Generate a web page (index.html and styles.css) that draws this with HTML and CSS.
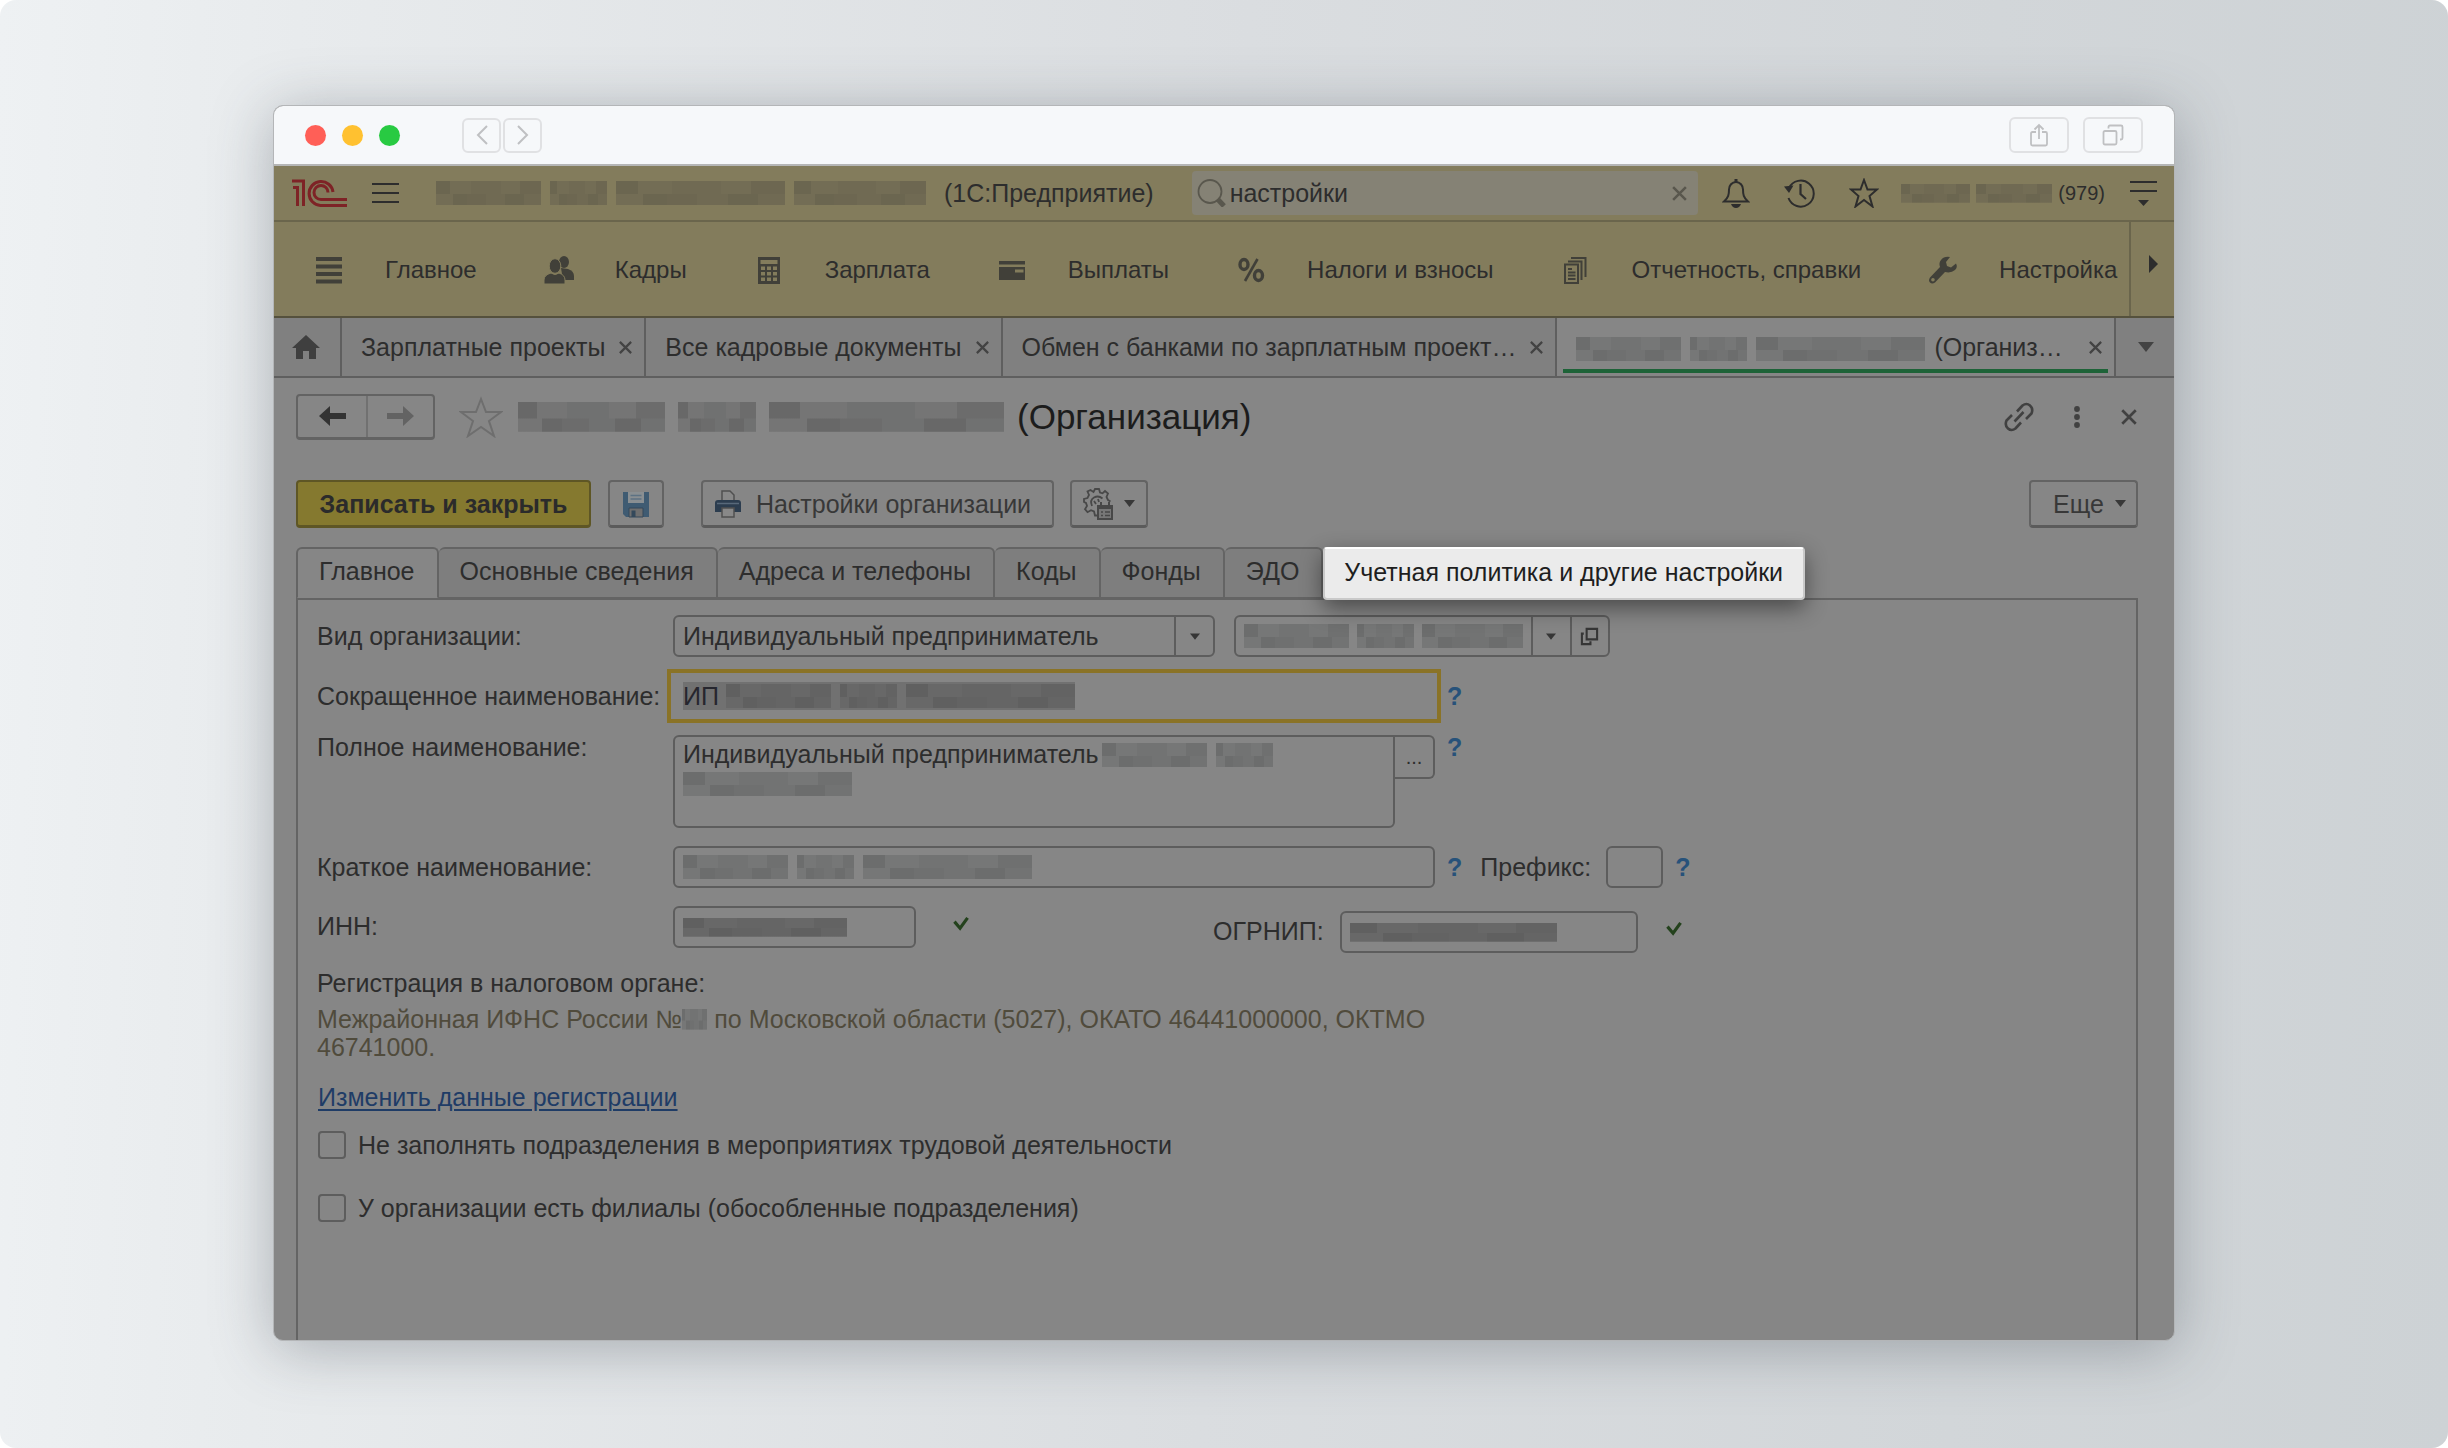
FILE: index.html
```html
<!DOCTYPE html>
<html lang="ru">
<head>
<meta charset="utf-8">
<title>Организация — 1С:Предприятие</title>
<link rel="stylesheet" href="styles.css">
</head>
<body>
<svg class="defs" aria-hidden="true">
  <symbol id="x" viewBox="0 0 16 16"><path d="M2 2l12 12M14 2L2 14" fill="none" stroke="currentColor" stroke-width="2.4"/></symbol>
  <symbol id="tri" viewBox="0 0 16 10"><path d="M0 0h16L8 10z" fill="currentColor"/></symbol>
  <symbol id="check" viewBox="0 0 18 16"><path d="M2 6l6 7 8-11" fill="none" stroke="currentColor" stroke-width="3.4"/></symbol>
  <symbol id="open" viewBox="0 0 20 20"><path d="M7 2h11v11H7zM4 7H2v11h9v-3" fill="none" stroke="currentColor" stroke-width="2.2"/></symbol>
</svg>
<div class="stage">
<main class="window">
  <header class="titlebar">
    <span class="dot red"></span><span class="dot yellow"></span><span class="dot green"></span>
    <div class="history">
      <button class="mac" aria-label="Назад"><svg width="12" height="20" viewBox="0 0 12 20"><path d="M11 1L2 10l9 9" fill="none" stroke="currentColor" stroke-width="2"/></svg></button>
      <button class="mac" aria-label="Вперёд"><svg width="12" height="20" viewBox="0 0 12 20"><path d="M1 1l9 9-9 9" fill="none" stroke="currentColor" stroke-width="2"/></svg></button>
    </div>
    <div class="share">
      <button class="mac wide" aria-label="Поделиться"><svg width="20" height="24" viewBox="0 0 20 24"><path d="M7 9H3.500q-1.500 0-1.500 1.500V21q0 1.500 1.500 1.500h13q1.500 0 1.500-1.500V10.500Q18 9 16.500 9H13M10 16V2M5.500 6.500L10 2l4.500 4.500" fill="none" stroke="currentColor" stroke-width="1.800"/></svg></button>
      <button class="mac wide" aria-label="Вкладки"><svg width="22" height="22" viewBox="0 0 22 22"><path d="M3 7h10q1.500 0 1.500 1.500V19q0 1.500-1.500 1.500H3q-1.500 0-1.500-1.500V8.500Q1.500 7 3 7zM6.500 4.500V3Q6.500 1.500 8 1.500h11q1.500 0 1.500 1.500v11q0 1.500-1.500 1.500h-1" fill="none" stroke="currentColor" stroke-width="1.800"/></svg></button>
    </div>
  </header>

  <section class="appbar">
    <svg class="logo" width="56" height="28" viewBox="0 0 56 28"><g fill="none" stroke="currentColor" stroke-width="3"><path d="M1 8.500h4.500V27M0 2h11.500V27"/><path d="M41 13A12 12 0 1 0 28.500 26.500H55"/><path d="M36 13.500A7 7 0 1 0 29 20.500H55"/></g></svg>
    <button class="icon burger" aria-label="Меню"><svg width="28" height="22" viewBox="0 0 28 22"><path d="M0 2h27M0 11h27M0 20h27" stroke="currentColor" stroke-width="2.200"/></svg></button>
    <div class="base">
      <i class="mz olive w105"></i><i class="mz olive w57"></i><i class="mz olive w169"></i><i class="mz olive w132"></i>
    </div>
    <span class="product">(1С:Предприятие)</span>
    <label class="search">
      <svg width="30" height="28" viewBox="0 0 30 28"><circle cx="13" cy="12.500" r="11.500" fill="none" stroke="currentColor" stroke-width="1.800"/><path d="M20.500 20l6.500 7" stroke="currentColor" stroke-width="5"/></svg>
      <input type="text" value="настройки" aria-label="Поиск">
      <button class="icon clear" aria-label="Очистить"><svg width="17" height="17"><use href="#x"/></svg></button>
    </label>
    <div class="tools">
      <button class="icon" aria-label="Уведомления"><svg width="28" height="30" viewBox="0 0 28 30"><path d="M2 23.500c4.500-4 5-7 5-12 0-4 3-7.500 7-7.500s7 3.500 7 7.500c0 5 .5 8 5 12z" fill="none" stroke="currentColor" stroke-width="2"/><path d="M12.500 1h3v3h-3zM9 26h10q-1.500 4-5 4t-5-4z" fill="currentColor"/></svg></button>
      <button class="icon" aria-label="История"><svg width="31" height="30" viewBox="0 0 31 30"><path d="M5 10A13 13 0 1 1 4.500 20" fill="none" stroke="currentColor" stroke-width="2"/><path d="M0 8.500l9.500-1L5 15z" fill="currentColor"/><path d="M16.500 6v10l5.500 5" fill="none" stroke="currentColor" stroke-width="2.200"/></svg></button>
      <button class="icon" aria-label="Избранное"><svg width="30" height="30" viewBox="0 0 30 30"><path d="M15 2l3.500 9.500H28l-7.500 6.500 3 10.500-8.500-6.500-8.500 6.500 3-10.500L2 11.500h9.500z" fill="none" stroke="currentColor" stroke-width="2"/></svg></button>
    </div>
    <div class="user"><i class="mz olive short w69"></i><i class="mz olive short w76"></i><span>(979)</span></div>
    <button class="icon" aria-label="Сервис"><svg width="28" height="26" viewBox="0 0 28 26"><path d="M0 2h27M0 11h27" stroke="currentColor" stroke-width="2.200"/><path d="M8 20h11l-5.500 6z" fill="currentColor"/></svg></button>
  </section>

  <nav class="sections">
    <div class="items">
      <a href="#"><svg viewBox="0 0 30 30"><path d="M2 4h26M2 11.500h26M2 19h26M2 26.500h26" stroke="currentColor" stroke-width="3.800"/></svg>Главное</a>
      <a href="#"><svg viewBox="0 0 30 30"><g fill="currentColor"><ellipse cx="20" cy="7" rx="5" ry="6"/><path d="M17 13l7 1q6 2 6 7v4H19z"/><ellipse cx="11" cy="11" rx="5.800" ry="7.300" stroke="#837c5c"/><path d="M0 29v-4q0-5 7-7 4 3 8 0 6 2 6 7v4z" stroke="#837c5c"/></g></svg>Кадры</a>
      <a href="#"><svg viewBox="0 0 30 30"><path fill="currentColor" fill-rule="evenodd" d="M4 2h22v27H4zM6.500 5v4h17V5zM7 11.500v3.500h4v-3.500zM13 11.500v3.500h4v-3.500zM19 11.500v3.500h4v-3.500zM7 17v3.500h4V17zM13 17v3.500h4V17zM19 17v3.500h4V17zM7 22.500v3.500h4v-3.500zM13 22.500v3.500h4v-3.500zM19 22.500v3.500h4v-3.500z"/></svg>Зарплата</a>
      <a href="#"><svg viewBox="0 0 30 30"><path fill="currentColor" fill-rule="evenodd" d="M2 6h26v3.500H2zM2 12h26v13H2zM18 14.500v3h8.500v-3z"/></svg>Выплаты</a>
      <a href="#"><svg viewBox="0 0 30 30"><g fill="none" stroke="currentColor" stroke-width="3.400"><ellipse cx="8" cy="9.500" rx="4" ry="5"/><ellipse cx="22.500" cy="20.500" rx="4" ry="5"/><path d="M21.500 4L9 26" stroke-width="2.600"/></g></svg>Налоги и взносы</a>
      <a href="#"><svg viewBox="0 0 30 30"><g fill="none" stroke="currentColor" stroke-width="2"><path d="M4 9.500h13V28H4zM7 6.500h13.500V25M10 3H24.500v19"/><path d="M7 14h4M7 17.500h7.500M7 20.500h7.500M7 24h7.500"/></g></svg>Отчетность, справки</a>
      <a href="#"><svg viewBox="0 0 30 30"><path fill="currentColor" d="M28 8.500l-5 4-4-1.500-1-4L22 2q-6-1-9 3-2.500 3-1 7L2 22.500q-2 3 0 5t5 0L17 17q6 1.500 10-2 3-3 1-6.500zM5 23a1.800 1.800 0 1 1-.1 3.600A1.800 1.800 0 0 1 5 23z"/></svg>Настройка</a>
    </div>
    <button class="icon more" aria-label="Далее"><svg width="9" height="18" viewBox="0 0 9 18"><path d="M0 0v18l9-9z" fill="currentColor"/></svg></button>
  </nav>

  <nav class="opened">
    <a class="home" href="#" aria-label="Начальная страница"><svg width="28" height="24" viewBox="0 0 28 24"><path d="M14 0l14 13h-4v11h-7v-8h-6v8H4V13H0z" fill="currentColor"/></svg></a>
    <div class="tab"><a href="#">Зарплатные проекты</a><button class="icon" aria-label="Закрыть"><svg width="15" height="15"><use href="#x"/></svg></button></div>
    <div class="tab"><a href="#">Все кадровые документы</a><button class="icon" aria-label="Закрыть"><svg width="15" height="15"><use href="#x"/></svg></button></div>
    <div class="tab"><a href="#">Обмен с банками по зарплатным проект…</a><button class="icon" aria-label="Закрыть"><svg width="15" height="15"><use href="#x"/></svg></button></div>
    <div class="tab current"><a href="#"><i class="mz w105"></i><i class="mz w57"></i><i class="mz w169"></i>(Организ…</a><button class="icon" aria-label="Закрыть"><svg width="15" height="15"><use href="#x"/></svg></button></div>
    <button class="icon list" aria-label="Список окон"><svg width="16" height="10"><use href="#tri"/></svg></button>
  </nav>

  <section class="page">
    <div class="heading">
      <div class="backfwd">
        <button aria-label="Назад"><svg width="27" height="20" viewBox="0 0 27 20"><path d="M0 10L11 0v7h16v6H11v7z" fill="currentColor"/></svg></button>
        <button class="off" aria-label="Вперед"><svg width="27" height="20" viewBox="0 0 27 20"><path d="M27 10L16 0v7H0v6h16v7z" fill="currentColor"/></svg></button>
      </div>
      <svg class="fav" width="44" height="42" viewBox="0 0 44 42"><path d="M22 3l5 13h15L30 25l5 15-13-9-13 9 5-15L2 16h15z" fill="none" stroke="currentColor" stroke-width="2"/></svg>
      <h1><i class="mz big w147"></i><i class="mz big w78"></i><i class="mz big w235"></i>(Организация)</h1>
      <div class="wintools">
        <button class="icon" aria-label="Ссылка"><svg width="30" height="30" viewBox="0 0 30 30"><g fill="none" stroke="currentColor" stroke-width="2.600"><path d="M13 9.500L18.500 3.500q4-3 7.500 0t1.500 8L22 17M17 20.500l-5.500 6q-4 3-7.500 0t-1.500-8L8 13M10.500 19.500l9-9.500"/></g></svg></button>
        <button class="icon" aria-label="Еще"><svg width="6" height="22" viewBox="0 0 6 22"><g fill="currentColor"><circle cx="3" cy="3" r="2.900"/><circle cx="3" cy="11" r="2.900"/><circle cx="3" cy="19" r="2.900"/></g></svg></button>
        <button class="icon" aria-label="Закрыть"><svg width="18" height="18"><use href="#x"/></svg></button>
      </div>
    </div>

    <div class="commands">
      <button class="btn primary">Записать и закрыть</button>
      <button class="btn save" aria-label="Записать"><svg width="28" height="28" viewBox="0 0 28 28"><path d="M1 2h26v25H4l-3-3z" fill="#3f5b72"/><path d="M6 2h16v11H6z" fill="#8a8f92"/><path d="M8.500 5.500h11M8.500 9h11" stroke="#5d7283" stroke-width="1.500"/><path d="M7 18h14v9H7z" fill="#6f6f6f" stroke="#34495b"/><path d="M9.500 20.500h4V27h-4z" fill="#34495b"/></svg></button>
      <button class="btn print"><svg width="28" height="28" viewBox="0 0 28 28"><path d="M8 11V1h8l4 4v6z" fill="#888" stroke="#505050" stroke-width="1.500"/><path d="M1 13q0-3 3-3h20q3 0 3 3v9H1z" fill="#2c3d4f"/><path d="M3 13.500h22" stroke="#58697a" stroke-width="1.500"/><path d="M8 18h12v9H8z" fill="#888" stroke="#505050" stroke-width="1.500"/></svg>Настройки организации</button>
      <button class="btn gear" aria-label="Действия"><svg width="30" height="32" viewBox="0 0 30 32"><g fill="none" stroke="#484848" stroke-width="1.800"><path d="M14 27.500h-2l-1-4-3-1.300-3.500 2-2.500-3 2-3.200L3 15l-2-1v-3l3.500-1L6 7 4.500 3.500 7.500 2l3 2L12 1h4l1 3.500 2.500.8L22 3l3 2.500L23.500 9l1.500 3 2.500 1.500"/><path d="M9 18q-2.500-6 2-8.500t8.500 1M11 13l2 3m2-5l1 3"/></g><path d="M15 18h14v13H15zM18 14v5M26 14v5M15 20h14" fill="#777" stroke="#484848" stroke-width="2"/><path d="M18 24h2M22 24h5M18 27.500h2M22 27.500h5" stroke="#484848" stroke-width="1.500"/></svg><svg width="11" height="7"><use href="#tri"/></svg></button>
      <button class="btn else">Еще<svg width="11" height="7"><use href="#tri"/></svg></button>
    </div>

    <div class="formtabs">
      <button class="active">Главное</button><button>Основные сведения</button><button>Адреса и телефоны</button><button>Коды</button><button>Фонды</button><button>ЭДО</button><button class="spot">Учетная политика и другие настройки</button>
    </div>

    <form class="panel">
      <div class="row">
        <label class="cap" for="kind">Вид организации:</label>
        <div class="field kind"><select id="kind"><option>Индивидуальный предприниматель</option></select><span class="cell"><svg width="10" height="7"><use href="#tri"/></svg></span></div>
        <div class="field person"><i class="mz w105"></i><i class="mz w57"></i><i class="mz w101"></i><input type="text" aria-label="Физическое лицо"><button type="button" class="cell" aria-label="Выбрать"><svg width="10" height="7"><use href="#tri"/></svg></button><button type="button" class="cell" aria-label="Открыть"><svg width="19" height="19"><use href="#open"/></svg></button></div>
      </div>
      <div class="row">
        <label class="cap" for="short">Сокращенное наименование:</label>
        <div class="field long focused"><span class="sel">ИП<i class="mz deep w105"></i><i class="mz deep w57"></i><i class="mz deep w169"></i></span><input id="short" type="text"></div>
        <a class="help" href="#">?</a>
      </div>
      <div class="row full">
        <label class="cap top" for="full">Полное наименование:</label>
        <div class="area"><textarea id="full">Индивидуальный предприниматель</textarea>
          <div class="over one"><i class="mz w105"></i><i class="mz w57"></i></div><div class="over two"><i class="mz w169"></i></div></div>
        <button type="button" class="dots" aria-label="Редактировать">...</button>
        <a class="help top" href="#">?</a>
      </div>
      <div class="row">
        <label class="cap" for="brief">Краткое наименование:</label>
        <div class="field long"><i class="mz w105"></i><i class="mz w57"></i><i class="mz w169"></i><input id="brief" type="text"></div>
        <a class="help" href="#">?</a>
        <label class="prefix" for="prefix">Префикс:</label>
        <div class="field tiny"><input id="prefix" type="text"></div>
        <a class="help" href="#">?</a>
      </div>
      <div class="row ids">
        <label class="cap" for="inn">ИНН:</label>
        <div class="field inn"><i class="mz deep short w164"></i><input id="inn" type="text"></div>
        <svg class="ok" width="18" height="15"><use href="#check"/></svg>
        <div class="ogrn">
          <label for="ogrn">ОГРНИП:</label>
          <div class="field"><i class="mz deep short w207"></i><input id="ogrn" type="text"></div>
          <svg class="ok" width="18" height="15"><use href="#check"/></svg>
        </div>
      </div>
      <p class="reg">Регистрация в налоговом органе:</p>
      <p class="tax">Межрайонная ИФНС России №<i class="mz short w25"></i> по Московской области (5027), ОКАТО 46441000000, ОКТМО 46741000.</p>
      <a class="change" href="#">Изменить данные регистрации</a>
      <label class="tick"><input type="checkbox">Не заполнять подразделения в мероприятиях трудовой деятельности</label>
      <label class="tick"><input type="checkbox">У организации есть филиалы (обособленные подразделения)</label>
    </form>
  </section>
</main>
</div>
</body>
</html>
```
FILE: styles.css
```css
* { box-sizing: border-box; }
body { margin: 0; background: #fff; color: #2d2d2d; font: 25px/28px "Liberation Sans", Arial, sans-serif; }
button, input, select, textarea { font: inherit; color: inherit; margin: 0; padding: 0; border: 0; background: none; border-radius: 0; outline: 0; }
button { display: flex; align-items: center; justify-content: center; }
a { color: inherit; text-decoration: none; }
svg { display: block; flex: none; }
h1, p { margin: 0; font-weight: normal; }
.defs { position: absolute; width: 0; height: 0; }

.stage { display: flex; min-height: 100vh; padding: 105px 273px 107px; border-radius: 16px; background: linear-gradient(92deg, #eef1f3 0%, #e8ebed 12%, #dadde0 50%, #d2d6d9 80%, #cdd2d5 100%); }
.window { flex: 1; min-width: 0; display: flex; flex-direction: column; border: 1px solid #b4b6b8; border-radius: 10px; background: #868686; box-shadow: 0 8px 60px rgba(60, 70, 80, .36); overflow: hidden; }

/* Browser frame */
.titlebar { display: flex; align-items: center; height: 60px; padding: 0 31px; background: #f6f8fa; border-bottom: 2px solid #b5b6b6; }
.dot { width: 21px; height: 21px; margin-right: 16px; border-radius: 50%; }
.red { background: #ff5f57; }
.yellow { background: #ffc130; }
.green { background: #28ca42; }
.history { display: flex; gap: 2px; margin-left: 46px; }
.share { display: flex; gap: 14px; margin-left: auto; }
.mac { width: 39px; height: 35px; border: 2px solid #e0e1e3; border-radius: 6px; color: #bfc0c2; }
.mac.wide { width: 60px; height: 36px; }

/* Redacted text */
.mz { flex: none; display: inline-block; height: 24px; margin-right: 9px; vertical-align: middle; --a: #727373; --b: #6c6d6d; --c: #767777; --d: #6f7070;
  background:
    linear-gradient(90deg, var(--b) 0 13%, var(--c) 13% 33%, var(--a) 33% 62%, var(--c) 62% 80%, var(--d) 80%) 0 0 / 100% 55% no-repeat,
    linear-gradient(90deg, var(--c) 0 16%, var(--b) 16% 30%, var(--d) 30% 48%, var(--a) 48% 66%, var(--b) 66% 84%, var(--a) 84%) 0 100% / 100% 46% no-repeat; }
.mz.olive { --a: #706a53; --b: #6b6650; --c: #736d55; --d: #6d6751; }
.mz.deep { --a: #656565; --b: #606060; --c: #686868; --d: #636363; }
.mz.big { height: 30px; margin-right: 13px; --a: #707171; --b: #686868; --c: #757575; --d: #6c6c6c; }
.mz.short { height: 19px; }
.w25 { width: 25px; } .w57 { width: 57px; } .w69 { width: 69px; } .w76 { width: 76px; } .w78 { width: 78px; }
.w101 { width: 101px; } .w105 { width: 105px; } .w132 { width: 132px; } .w147 { width: 147px; } .w164 { width: 164px; }
.w169 { width: 169px; } .w207 { width: 207px; } .w235 { width: 235px; }

/* Top bar */
.appbar { display: flex; align-items: center; height: 56px; padding: 0 16px 0 18px; background: #837c5c; border-bottom: 2px solid #6a654c; }
.logo { color: #7e2326; }
.burger { margin-left: 24px; }
.base { display: flex; margin-left: 36px; }
.product { margin-left: 9px; white-space: nowrap; }
.search { flex: 1; display: flex; align-items: center; min-width: 0; height: 44px; margin-left: 38px; padding: 0 10px 0 5px; border-radius: 4px; background: #858275; }
.search svg { color: #59574d; }
.search input { flex: 1; min-width: 0; margin-left: 3px; }
.tools { display: flex; gap: 34px; margin-left: 24px; }
.user { display: flex; align-items: center; margin: 0 25px 0 22px; font-size: 20px; }
.user .mz { margin-right: 6px; }

/* Sections */
.sections { display: flex; height: 96px; background: #837c5c; border-bottom: 2px solid #55513d; }
.items { flex: 1; min-width: 0; display: flex; align-items: center; gap: 67px; padding: 2px 0 0 40px; overflow: hidden; white-space: nowrap; font-size: 24px; }
.items a { display: flex; align-items: center; gap: 41px; }
.items svg { width: 30px; height: 30px; color: #414039; }
.more { width: 45px; padding: 0 2px 10px 4px; border-left: 2px solid #6a654c; }

/* Open windows */
.opened { display: flex; height: 60px; background: #808080; border-bottom: 2px solid #5f5f5f; }
.home { flex: none; width: 68px; display: flex; align-items: center; justify-content: center; border-right: 2px solid #5f5f5f; color: #3f3f3f; }
.home svg { margin-right: 3px; }
.tab { flex: none; display: flex; align-items: center; gap: 13px; padding: 0 11px 0 19px; border-right: 2px solid #5f5f5f; white-space: nowrap; }
.tab .icon, .list { color: #434343; }
.tab.current { flex: 1; position: relative; justify-content: space-between; background: #868686; }
.current::after { content: ""; position: absolute; left: 6px; right: 6px; bottom: 3px; height: 4px; background: #1e6338; }
.list { flex: none; width: 58px; padding-left: 2px; }

/* Page */
.page { flex: 1; display: flex; flex-direction: column; padding: 15px 36px 0 22px; }
.heading { display: flex; align-items: center; height: 47px; }
.backfwd { display: flex; height: 46px; border: 2px solid #636363; border-bottom-width: 3px; border-radius: 4px; }
.backfwd button { width: 68px; color: #333; }
.backfwd .off { width: 67px; border-left: 2px solid #717171; color: #636363; }
.fav { margin-left: 24px; color: #6e6e6e; }
h1 { display: flex; align-items: center; margin-left: 15px; font-size: 35px; line-height: 40px; color: #1c1c1c; white-space: nowrap; }
.wintools { display: flex; align-items: center; gap: 40px; margin-left: auto; color: #414141; }

.commands { display: flex; margin-top: 40px; }
.btn { height: 48px; border: 2px solid #636363; border-bottom: 3px solid #5b5b5b; border-radius: 4px; color: #383838; white-space: nowrap; }
.primary { width: 295px; border-color: #5e5625; background: #85792f; color: #2b2b2b; font-weight: bold; }
.save { width: 56px; margin-left: 17px; }
.print { gap: 14px; width: 353px; margin-left: 37px; padding-right: 10px; }
.gear { gap: 11px; width: 78px; margin-left: 16px; }
.else { gap: 11px; width: 109px; margin-left: auto; padding-left: 12px; }

.formtabs { display: flex; margin: 19px 0 -2px; }
.formtabs button { height: 52px; padding: 0 22px 4px 21px; border: 2px solid #646464; border-left-width: 0; border-radius: 6px 6px 0 0; background: #7e7e7e; white-space: nowrap; }
.formtabs .active { border-left-width: 2px; border-bottom-color: #868686; background: #868686; }
.formtabs .spot { position: relative; height: 53px; padding: 0 20px 4px 19px; border: 2px solid #c9c9c9; border-top-color: #fff; border-radius: 4px; background: #ebebeb; color: #1e1e1e; box-shadow: 0 8px 22px rgba(0, 0, 0, .45); }

.panel { flex: 1; padding: 15px 18px 0 19px; border: 2px solid #646464; border-bottom: 0; }
.row { display: flex; align-items: center; margin-bottom: 18px; }
.cap { flex: none; width: 356px; white-space: nowrap; }
.field { flex: none; display: flex; align-items: center; height: 42px; padding-left: 8px; border: 2px solid #5d5d5d; border-radius: 6px; }
.field input, .field select { flex: 1; min-width: 0; height: 38px; appearance: none; }
.cell { display: flex; align-items: center; justify-content: center; width: 39px; height: 38px; border-left: 2px solid #5d5d5d; color: #363636; }
.kind { width: 542px; }
.person { width: 376px; margin-left: 19px; }
.person .mz { margin-right: 8px; }
.long { width: 762px; }
.focused { border-color: transparent; border-radius: 0; outline: 4px solid #8a7327; outline-offset: 2px; }
.sel { display: flex; align-items: center; height: 28px; background: #717171; color: #26262e; }
.sel .mz:first-of-type { margin-left: 7px; }
.sel .mz:last-child { margin-right: 0; }
.help { margin-left: 12px; color: #27527a; font-weight: bold; }
.full { align-items: flex-start; height: 93px; }
.cap.top, .help.top { margin-top: -2px; }
.area { position: relative; width: 722px; height: 93px; }
.area textarea { display: block; width: 100%; height: 100%; padding: 3px 8px; border: 2px solid #5d5d5d; border-radius: 6px 0 6px 6px; resize: none; }
.over { position: absolute; display: flex; }
.one { left: 429px; top: 8px; }
.two { left: 10px; top: 37px; }
.dots { width: 40px; height: 44px; border: 2px solid #5d5d5d; border-left: 0; border-radius: 0 6px 6px 0; font-size: 20px; }
.prefix { margin: 0 15px 0 18px; }
.tiny { width: 57px; }
.ids { align-items: flex-start; height: 47px; margin-bottom: 16px; }
.ids .cap { line-height: 40px; }
.inn { width: 243px; }
.ok { margin: 10px 0 0 36px; color: #24421d; }
.ogrn { display: flex; margin: 5px 0 0 243px; line-height: 40px; }
.ogrn .field { width: 298px; margin-left: 16px; }
.ogrn .ok { margin-left: 27px; }
.tax { max-width: 1140px; margin-top: 8px; color: #504b3c; }
.tax .mz { height: 21px; margin: -4px 0 0; }
.change { display: table; margin: 22px 0 20px 1px; color: #1f3c66; text-decoration: underline; text-decoration-thickness: 2px; text-underline-offset: 3px; }
.tick { display: flex; align-items: center; gap: 12px; margin: 0 0 35px 1px; }
.tick input { appearance: none; width: 28px; height: 28px; border: 2px solid #5d5d5d; border-radius: 4px; }
```
